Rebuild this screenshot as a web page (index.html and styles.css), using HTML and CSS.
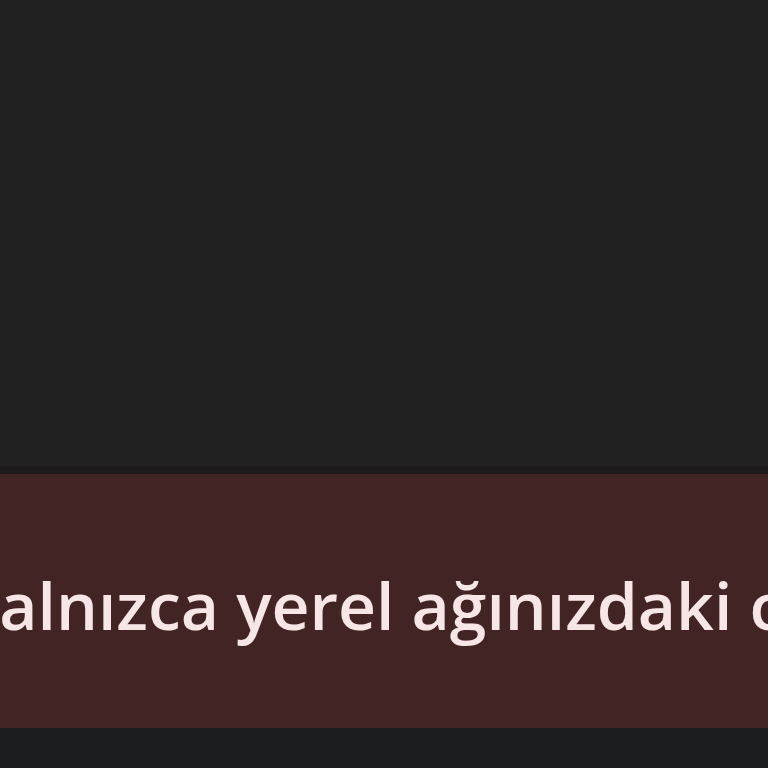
FILE: index.html
```html
<!DOCTYPE html>
<html>
  <head>
    <meta charset="UTF-8">
    <title>Uyarı</title>
    <link rel="stylesheet" href="styles.css">
  </head>
  <body>
    <div class="page">
      <div class="content"></div>
      <div class="banner">
        <p class="banner-text"><span class="lead">y</span>alnızca yerel ağınızdaki cihazlar</p>
      </div>
      <div class="footer"></div>
    </div>
  </body>
</html>
```

FILE: styles.css
```css
html, body {
  margin: 0;
  padding: 0;
  background-color: #212121;
}

.page {
  display: flex;
  flex-direction: column;
  height: 768px;
  overflow: hidden;
}

.content {
  flex: 0 0 466px;
  background-color: #212121;
}

.banner {
  flex: 0 0 262px;
  background-color: #432424;
  border-top: 8px solid #1d1b1b;
  box-sizing: border-box;
  display: flex;
  align-items: center;
  padding-top: 6px;
  overflow: hidden;
}

.banner-text {
  margin: 0 0 0 -36px;
  white-space: nowrap;
  font-family: "Open Sans", "Noto Sans", sans-serif;
  font-size: 66px;
  font-weight: 600;
  color: #f6e6e6;
}

.footer {
  flex: 1;
  background-color: #1c1d1f;
}
```
